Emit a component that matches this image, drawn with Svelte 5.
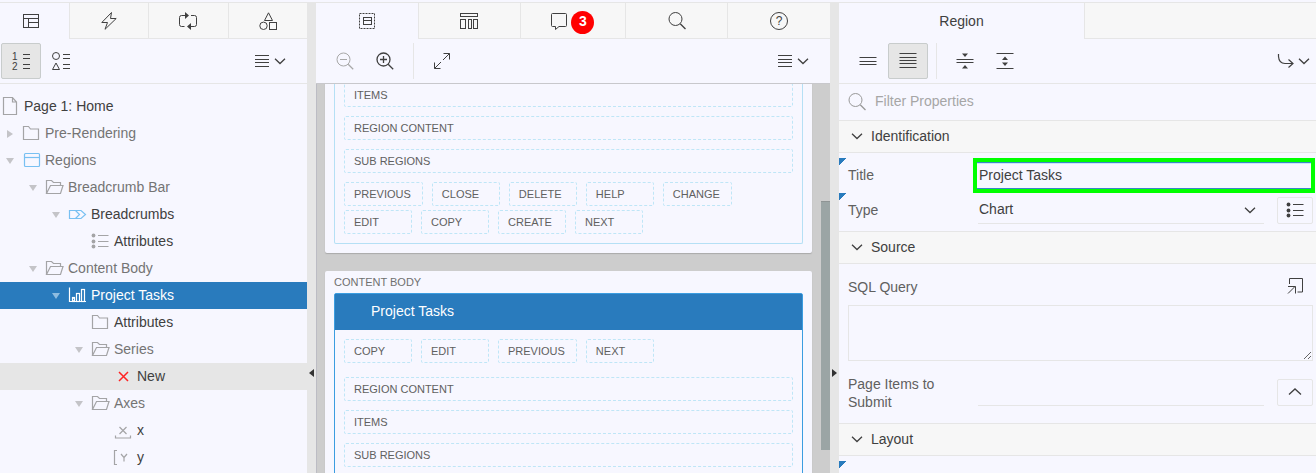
<script>
  const icons = {
    layout: '<rect x="2.5" y="3.5" width="15" height="13"/><path d="M2.5 7.5h15M7.5 7.5v9M7.5 11.5h10"/>',
    bolt: '<path d="M12.5 1.5 2.8 11.5H8.5L6 18.3 17.2 7.5H11.5Z"/>',
    loop: '<path d="M7 4.5H3.5Q1.5 4.5 1.5 6.5V13.5Q1.5 15.5 3.5 15.5H6.5M13 4.5H16.5Q18.5 4.5 18.5 6.5V13.5Q18.5 15.5 16.5 15.5H12"/><path class="fill" d="M7 1v7l4-3.500ZM13 12v7l-4-3.500Z"/>',
    shapes: '<path d="M10.5 1.8 14.5 9.5H6.5Z"/><circle cx="5.5" cy="14.8" r="3.7"/><rect x="11.5" y="11.5" width="7" height="7"/>',
    numbered: '<text x="1" y="8.500">1</text><text x="1" y="19">2</text><path d="M12 3.5h7M12 7.500h7M12 13.5h7M12 17.500h7"/>',
    grouped: '<circle cx="5" cy="5" r="3.5"/><path d="M5 12 8.5 18.500H1.500ZM12 3.500h7M12 7.500h7M12 13.500h7M12 17.500h7"/>',
    menu: '<path d="M3 4.500h14M3 8.500h14M3 11.500h14M3 15.500h14"/>',
    down: '<path stroke-width="1.3" d="m5 7.800 5 4.700 5-4.700"/>',
    up: '<path stroke-width="1.3" d="m4 12.500 6-5.500 6 5.500"/>',
    region: '<rect x="2.500" y="2.500" width="15" height="15" stroke-dasharray="2 1"/><rect x="6.500" y="6.500" width="8" height="7"/><path d="M6.500 9.500h8"/>',
    columns: '<rect x="1.500" y="2.500" width="17" height="3"/><rect x="1.500" y="8.500" width="5" height="9"/><rect x="9.500" y="8.500" width="3" height="9"/><rect x="14.500" y="8.500" width="4" height="9"/>',
    comment: '<path d="M3.500 2.500h13q1 0 1 1v11q0 1-1 1H10l-3.500 3v-3h-3q-1 0-1-1v-11q0-1 1-1Z"/>',
    search: '<circle cx="8.500" cy="8" r="6.500"/><path stroke-width="1.300" d="m13.200 12.700 5.300 5.300"/>',
    zoomout: '<circle cx="8.500" cy="8.500" r="6.500"/><path stroke-width="1.300" d="m13.200 13.200 5 5"/><path d="M5 8.500h7"/>',
    zoomin: '<circle cx="8.500" cy="8.500" r="6.500" stroke-width="1.300"/><path stroke-width="1.300" d="m13.200 13.200 5 5M5 8.500h7M8.500 5v7"/>',
    expand: '<path d="M11.500 2.500h6v6M17.500 2.500l-6.500 6.500M2.500 11.500v6h6M2.500 17.500l6.500-6.500"/>',
    help: '<circle cx="10" cy="10" r="8.500"/><text x="6.800" y="14.300" class="question">?</text>',
    lines3: '<path d="M1.500 6.500h17M1.500 10.500h17M1.500 13.500h17"/>',
    lines5: '<path d="M1.500 2.500h17M1.500 6.500h17M1.500 9.500h17M1.500 12.500h17M1.500 16.500h17"/>',
    collapse: '<path d="M1.500 8.500h17M1.500 11.500h17"/><path class="fill" d="M7 2.500h6l-3 3.500ZM7 17.500h6l-3-3.500Z"/>',
    spread: '<path d="M1.500 2.500h17M1.500 17.500h17"/><path class="fill" d="M7 9h6l-3-3.500ZM7 11.500h6l-3 3.500Z"/>',
    goto: '<path stroke-width="1.200" d="M2.500 3v2.500Q3 12.500 9 12.500H17M12.500 8.500l4.500 4-4.500 4"/>',
    list: '<circle class="fill" cx="3.500" cy="4.500" r="1.900"/><circle class="fill" cx="3.500" cy="10.500" r="1.900"/><circle class="fill" cx="3.500" cy="15.500" r="1.900"/><path d="M8 4.500h10.500M8 10.500h10.500M8 15.500h10.500"/>',
    popout: '<path d="M4.500 8V2.500h13v13.500H12.500M3 17.500l7-7M3 10.500H10.500V17.500"/>',
    page: '<path d="M3.500 1.500h9l4 4.500v12.500h-13ZM12.500 1.500v4.500h4"/>',
    folder: '<path d="M2.500 3.500h5l2 2.500h8v10.500h-15Z"/>',
    open: '<path d="M2.500 16.500v-13h5l2 2h7v3M2.500 16.500l4-8h12.500l-2.500 8Z"/>',
    window: '<rect x="3.500" y="3.500" width="15" height="13" rx="1"/><path d="M3.500 7.500h15"/>',
    crumbs: '<path d="M2.500 6.500h11.500l4.500 4-4.500 4H2.500ZM8.500 6.500l4 4-4 4"/>',
    chart: '<path d="M2.500 2.500v14h16.500"/><rect x="5.500" y="12.500" width="2" height="4"/><rect x="9.500" y="8.500" width="3" height="8"/><rect x="14.500" y="4.500" width="3" height="12"/>',
    cross: '<path d="m6 6 9 9m0-9-9 9"/>',
    axisx: '<path d="M2.500 15.500v2.500h15v-2.500M6.500 7l7 7m0-7-7 7"/>',
    axisy: '<path d="M4 3.500h-2.500v14H4M8 7l3 3.500V14.500M14 7l-3 3.500"/>'
  };

  const tree = [
    { level: 1, icon: 'folder', label: 'Pre-Rendering', group: true, toggle: 'closed' },
    { level: 1, icon: 'window', label: 'Regions', group: true, toggle: 'open', blue: true },
    { level: 2, icon: 'open', label: 'Breadcrumb Bar', group: true, toggle: 'open' },
    { level: 3, icon: 'crumbs', label: 'Breadcrumbs', toggle: 'open', blue: true },
    { level: 4, icon: 'list', label: 'Attributes' },
    { level: 2, icon: 'open', label: 'Content Body', group: true, toggle: 'open' },
    { level: 3, icon: 'chart', label: 'Project Tasks', toggle: 'open', selected: true },
    { level: 4, icon: 'folder', label: 'Attributes' },
    { level: 4, icon: 'open', label: 'Series', group: true, toggle: 'open' },
    { level: 5, icon: 'cross', label: 'New', hover: true, red: true },
    { level: 4, icon: 'open', label: 'Axes', group: true, toggle: 'open' },
    { level: 5, icon: 'axisx', label: 'x' },
    { level: 5, icon: 'axisy', label: 'y' }
  ];

  let title = $state('Project Tasks');
</script>

{#snippet icon(name)}
  <svg class="icon" width="20" height="20" viewBox="0 0 20 20" aria-hidden="true">{@html icons[name]}</svg>
{/snippet}

{#snippet slots(names)}
  <div class="slots">
    {#each names as name}<div class="slot">{name}</div>{/each}
  </div>
{/snippet}

{#snippet section(name)}
  <h2><button class="section">{@render icon('down')}{name}</button></h2>
{/snippet}

<main>
  <section class="panel">
    <nav class="tabs tree-tabs">
      <button class="tab active" aria-label="Rendering">{@render icon('layout')}</button>
      <button class="tab" aria-label="Dynamic Actions">{@render icon('bolt')}</button>
      <button class="tab" aria-label="Processing">{@render icon('loop')}</button>
      <button class="tab" aria-label="Shared Components">{@render icon('shapes')}</button>
    </nav>
    <div class="toolbar snug">
      <button class="tool pressed" aria-label="Processing order">{@render icon('numbered')}</button>
      <button class="tool" aria-label="Component type">{@render icon('grouped')}</button>
      <button class="menu" aria-label="Menu">{@render icon('menu')}{@render icon('down')}</button>
    </div>
    <ul class="tree">
      <li class="row">{@render icon('page')}<span>Page 1: Home</span></li>
      {#each tree as node}
        <li
          class="row"
          class:group={node.group}
          class:selected={node.selected}
          class:hover={node.hover}
          class:blue={node.blue}
          class:red={node.red}
          style:padding-left="{(node.level - 1) * 23}px"
        >
          <span class="toggle {node.toggle ?? ''}"></span>
          {@render icon(node.icon)}<span>{node.label}</span>
        </li>
      {/each}
    </ul>
  </section>

  <div class="splitter"><button class="grip left" aria-label="Collapse tree"></button></div>

  <section class="panel">
    <nav class="tabs">
      <button class="tab active" aria-label="Layout">{@render icon('region')}</button>
      <button class="tab" aria-label="Component View">{@render icon('columns')}</button>
      <button class="tab messages" aria-label="Messages">{@render icon('comment')}<span class="badge">3</span></button>
      <button class="tab" aria-label="Search">{@render icon('search')}</button>
      <button class="tab" aria-label="Help">{@render icon('help')}</button>
    </nav>
    <div class="toolbar grid-bar">
      <button class="tool dim" aria-label="Zoom out">{@render icon('zoomout')}</button>
      <button class="tool" aria-label="Zoom in">{@render icon('zoomin')}</button>
      <span class="rule"></span>
      <button class="tool" aria-label="Expand">{@render icon('expand')}</button>
      <button class="menu" aria-label="Menu">{@render icon('menu')}{@render icon('down')}</button>
    </div>
    <div class="canvas">
      <div class="pages">
        <article class="card first">
          <div class="box">
            <div class="slot">ITEMS</div>
            <div class="slot">REGION CONTENT</div>
            <div class="slot">SUB REGIONS</div>
            {@render slots(['PREVIOUS', 'CLOSE', 'DELETE', 'HELP', 'CHANGE', 'EDIT', 'COPY', 'CREATE', 'NEXT'])}
          </div>
        </article>
        <article class="card">
          <h3>CONTENT BODY</h3>
          <div class="box chosen">
            <header>Project Tasks</header>
            {@render slots(['COPY', 'EDIT', 'PREVIOUS', 'NEXT'])}
            <div class="slot after">REGION CONTENT</div>
            <div class="slot">ITEMS</div>
            <div class="slot">SUB REGIONS</div>
          </div>
        </article>
      </div>
      <div class="scroll"><div class="thumb"></div></div>
    </div>
  </section>

  <div class="splitter"><button class="grip right" aria-label="Collapse properties"></button></div>

  <section class="panel">
    <nav class="tabs prop-tabs">
      <button class="tab active">Region</button>
      <span class="tab"></span>
    </nav>
    <div class="toolbar prop-bar">
      <button class="tool" aria-label="Show common">{@render icon('lines3')}</button>
      <button class="tool pressed" aria-label="Show all">{@render icon('lines5')}</button>
      <span class="rule"></span>
      <button class="tool" aria-label="Collapse all">{@render icon('collapse')}</button>
      <button class="tool" aria-label="Expand all">{@render icon('spread')}</button>
      <button class="menu" aria-label="Go to group">{@render icon('goto')}{@render icon('down')}</button>
    </div>
    <div class="filter">
      {@render icon('search')}
      <input type="search" aria-label="Filter Properties" placeholder="Filter Properties" />
    </div>

    {@render section('Identification')}
    <div class="props">
      <div class="prop changed">
        <label for="title">Title</label>
        <div class="focus"><input id="title" bind:value={title} /></div>
      </div>
      <div class="prop changed">
        <label for="type">Type</label>
        <div class="field">
          <select id="type"><option>Chart</option></select>
          {@render icon('down')}
        </div>
        <button class="pick" aria-label="Pick type">{@render icon('list')}</button>
      </div>
    </div>

    {@render section('Source')}
    <div class="props source">
      <div class="sql">
        <label for="sql">SQL Query</label>
        <button class="bare" aria-label="Code editor">{@render icon('popout')}</button>
      </div>
      <textarea id="sql"></textarea>
      <div class="prop tall">
        <label for="items">Page Items to Submit</label>
        <div class="field"><input id="items" /></div>
        <button class="pick" aria-label="Pick items">{@render icon('up')}</button>
      </div>
    </div>

    {@render section('Layout')}
    <div class="props"><div class="prop changed"></div></div>
  </section>
</main>

<style>
  :global(body) {
    margin: 0;
    background: #f7f7ff;
  }
  main {
    --line: #e6e6e6;
    --bg: #f7f7ff;
    --blue: #297bbd;
    display: grid;
    grid-template-columns: minmax(0, 307fr) 9px minmax(0, 514fr) 9px minmax(0, 477fr);
    height: 100vh;
    box-sizing: border-box;
    padding-top: 2px;
    overflow: hidden;
    background: var(--bg);
    color: #404040;
    font: 14px/18px "Liberation Sans", Arial, sans-serif;
  }
  main :global(*) {
    box-sizing: border-box;
  }
  button,
  input,
  select,
  textarea {
    margin: 0;
    padding: 0;
    border: 0;
    border-radius: 0;
    background: none;
    color: inherit;
    font: inherit;
    outline: 0;
    appearance: none;
  }
  .icon {
    flex: none;
    display: block;
    fill: none;
    stroke: currentColor;
  }
  .icon :global(.fill) {
    fill: currentColor;
    stroke: none;
  }
  .icon :global(text) {
    fill: currentColor;
    stroke: none;
    font-size: 10px;
  }
  .icon :global(.question) {
    font-size: 12px;
  }
  .panel {
    display: flex;
    flex-direction: column;
    min-height: 0;
    border-top: 1px solid var(--line);
  }

  .tabs {
    flex: none;
    display: flex;
    height: 36px;
  }
  .tab {
    flex: 1;
    display: flex;
    align-items: center;
    justify-content: center;
    gap: 2px;
    padding-top: 1px;
    border-left: 1px solid var(--line);
    border-bottom: 1px solid var(--line);
    background: #f7f7f7;
  }
  .tab.active {
    border-color: transparent;
    border-left: 0;
    background: var(--bg);
  }
  .tree-tabs .active {
    flex: 0 0 69px;
    padding-right: 8px;
  }
  .prop-tabs .active {
    flex-grow: 0;
    flex-basis: 245px;
  }
  .messages {
    padding-right: 2px;
  }
  .badge {
    width: 23px;
    height: 23px;
    margin-top: 3px;
    border-radius: 50%;
    background: #f00;
    color: #fff;
    font-weight: bold;
    line-height: 21px;
  }

  .toolbar {
    flex: none;
    display: flex;
    align-items: center;
    height: 45px;
    padding: 0 17px 0 9px;
    border-bottom: 1px solid var(--line);
  }
  .toolbar.snug {
    padding-left: 1px;
  }
  .toolbar.prop-bar {
    padding-right: 2px;
  }
  .grid-bar {
    border-color: #c8c8cc;
  }
  .tool {
    display: grid;
    place-items: center;
    width: 40px;
    height: 36px;
    border: 1px solid transparent;
    border-radius: 2px;
  }
  .tool.pressed {
    border-color: #c8cccc;
    background: #e6e6e6;
  }
  .tool.dim {
    color: #a8a8a8;
  }
  .rule {
    width: 1px;
    height: 36px;
    margin: 0 8px;
    background: var(--line);
  }
  .menu {
    display: flex;
    margin-left: auto;
  }
  .menu .icon + .icon {
    margin-left: -2px;
  }

  .tree {
    margin: 0;
    padding: 9px 0 0;
    list-style: none;
  }
  .row {
    display: flex;
    align-items: center;
    gap: 4px;
    height: 27px;
    padding-bottom: 1px;
  }
  .row .icon {
    color: #a4a4a6;
    stroke-width: 1.2px;
  }
  .row.group {
    color: #747474;
  }
  .row.blue .icon {
    color: #78c0f2;
  }
  .row.red .icon {
    color: #f22;
    stroke-width: 1.5px;
  }
  .row.hover {
    background: #e6e6e6;
  }
  .row.selected {
    background: var(--blue);
    color: #fff;
  }
  .row.selected .icon {
    color: #fff;
  }
  .toggle {
    display: grid;
    place-items: center;
    width: 20px;
    margin-right: -3px;
    padding-top: 1px;
    color: #c4c4c8;
  }
  .toggle::before {
    content: "";
    border: 4px solid transparent;
  }
  .toggle.open::before {
    border-top: 6px solid;
    border-bottom: 0;
  }
  .toggle.closed::before {
    border-left: 6px solid;
    border-right: 0;
  }
  .selected .toggle {
    color: #8ebce0;
  }

  .splitter {
    display: flex;
    flex-direction: column;
    justify-content: flex-end;
    padding-bottom: 90px;
    background: var(--line);
  }
  .grip {
    display: grid;
    place-items: center;
    height: 20px;
  }
  .grip::before {
    content: "";
    border: 4px solid transparent;
  }
  .grip.left::before {
    border-right: 5px solid #333;
    border-left: 0;
  }
  .grip.right::before {
    border-left: 5px solid #333;
    border-right: 0;
  }

  .canvas {
    flex: 1;
    display: flex;
    min-height: 0;
    overflow: hidden;
    border-left: 1px solid #bcbcc4;
    background: #cdcdcd;
  }
  .pages {
    flex: 1;
    min-width: 0;
    padding: 0 9px 0 8px;
    color: #606060;
    font-size: 11px;
  }
  .card {
    margin-bottom: 18px;
    padding: 0 9px 9px;
    border-radius: 2px;
    background: var(--bg);
    box-shadow: 0 1px 1px #aaa;
  }
  .card.first {
    margin-top: -10px;
  }
  .box {
    padding: 9px;
    border: 1px solid #b5e0f5;
    border-top: 0;
    border-radius: 2px;
  }
  .box.chosen {
    border: 1px solid #3b9de0;
    padding-top: 0;
  }
  .box header {
    height: 36px;
    margin: 0 -9px 9px;
    padding-left: 36px;
    background: var(--blue);
    color: #fff;
    font-size: 14px;
    line-height: 35px;
  }
  h3 {
    margin: 0;
    height: 22px;
    color: #707070;
    font-weight: normal;
    font-size: 11px;
    line-height: 22px;
  }
  .slot {
    height: 24px;
    margin-bottom: 9px;
    padding: 0 9px;
    border: 1px dashed #bfe6f7;
    border-radius: 2px;
    line-height: 22px;
  }
  .slots {
    display: flex;
    flex-wrap: wrap;
    gap: 4px 9px;
  }
  .slots .slot {
    min-width: 68px;
    margin: 0;
    padding-right: 11px;
  }
  .slot.after {
    margin-top: 14px;
  }
  .scroll {
    width: 9px;
  }
  .thumb {
    position: relative;
    top: 30%;
    height: 64%;
    border-top: 1px solid #8e9494;
    background: #9ba5a5;
  }

  .filter {
    flex: none;
    display: flex;
    align-items: center;
    gap: 8px;
    height: 36px;
    padding-left: 8px;
    color: #999;
  }
  .filter input {
    flex: 1;
    min-width: 0;
    padding-bottom: 2px;
  }
  .filter input::placeholder {
    color: #a6a6a6;
    opacity: 1;
  }
  h2 {
    margin: 0;
    font: inherit;
  }
  .section {
    display: flex;
    align-items: center;
    gap: 4px;
    width: 100%;
    height: 33px;
    padding: 0 0 1px 8px;
    border: solid var(--line);
    border-width: 1px 0;
    background: #f7f7f7;
    text-align: left;
  }
  .props {
    padding: 5px 0 3px;
    color: #606060;
  }
  .prop {
    display: grid;
    grid-template-columns: 121px minmax(0, 1fr) 36px;
    column-gap: 13px;
    align-items: center;
    min-height: 35px;
    padding: 0 3px 0 9px;
  }
  .prop label {
    padding-bottom: 1px;
  }
  .prop.changed {
    background: linear-gradient(135deg, var(--blue) 5px, transparent 5px) no-repeat;
  }
  .focus {
    grid-column: 2 / 4;
    height: 35px;
    margin: 0 -2px 0 -9px;
    border: 4px solid #0f0;
  }
  .focus input {
    display: block;
    width: 100%;
    height: 27px;
    padding: 0 0 2px 2px;
    border-top: 1px solid #3b86c8;
    border-bottom: 1px solid #3b86c8;
    box-shadow: inset 0 1px #c8e8f8;
    color: #404040;
  }
  .field {
    display: flex;
    margin-left: -4px;
    border-bottom: 1px solid var(--line);
    color: #404040;
  }
  .field select,
  .field input {
    flex: 1;
    min-width: 0;
    height: 26px;
    padding: 0 0 2px 1px;
  }
  .field .icon {
    margin: 3px 4px 0 -24px;
    pointer-events: none;
  }
  .pick {
    display: grid;
    place-items: center;
    height: 27px;
    padding-bottom: 1px;
    border: 1px solid var(--line);
    border-radius: 2px;
    color: #404040;
  }
  .source {
    padding: 12px 0;
  }
  .sql {
    display: flex;
    align-items: center;
    justify-content: space-between;
    height: 20px;
    margin-bottom: 9px;
    padding: 0 11px 0 9px;
  }
  .sql label {
    padding-top: 2px;
  }
  .bare {
    color: #404040;
  }
  textarea {
    display: block;
    width: calc(100% - 12px);
    height: 56px;
    margin: 0 3px 0 9px;
    border: 1px solid var(--line);
    resize: vertical;
  }
  .prop.tall {
    align-items: start;
    margin-top: 14px;
  }
  .tall label {
    padding: 0;
  }
  .tall .field,
  .tall .pick {
    margin-top: 4px;
  }
</style>
